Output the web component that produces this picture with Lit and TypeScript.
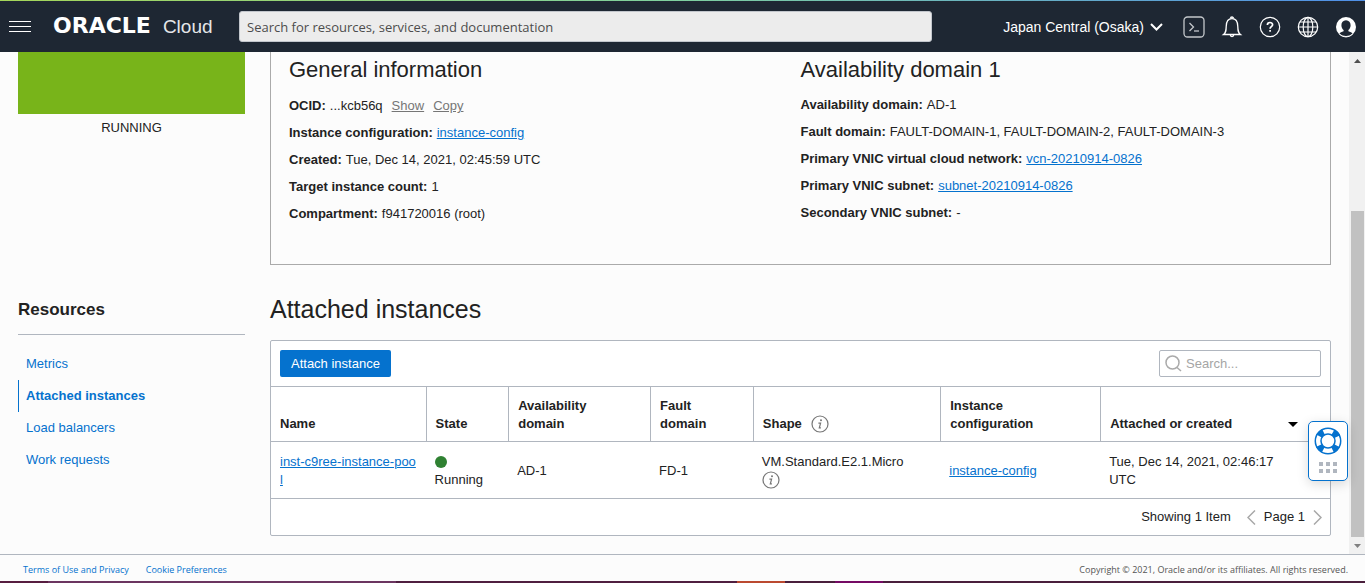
import { LitElement, html, css, svg } from "lit";
import { customElement } from "lit/decorators.js";

interface Detail {
  label: string;
  value?: string;
  link?: string;
  actions?: string[];
}

const general: Detail[] = [
  { label: "OCID:", value: "...kcb56q", actions: ["Show", "Copy"] },
  { label: "Instance configuration:", link: "instance-config" },
  { label: "Created:", value: "Tue, Dec 14, 2021, 02:45:59 UTC" },
  { label: "Target instance count:", value: "1" },
  { label: "Compartment:", value: "f941720016 (root)" },
];

const domain: Detail[] = [
  { label: "Availability domain:", value: "AD-1" },
  { label: "Fault domain:", value: "FAULT-DOMAIN-1, FAULT-DOMAIN-2, FAULT-DOMAIN-3" },
  { label: "Primary VNIC virtual cloud network:", link: "vcn-20210914-0826" },
  { label: "Primary VNIC subnet:", link: "subnet-20210914-0826" },
  { label: "Secondary VNIC subnet:", value: "-" },
];

const base = css`
  :host {
    display: block;
    box-sizing: border-box;
    font-family: "Liberation Sans", Arial, sans-serif;
    font-size: 13px;
    line-height: 18px;
    color: #222;
  }
  *, *::before, *::after { box-sizing: border-box; }
  button {
    font: inherit;
    color: inherit;
    background: none;
    border: 0;
    padding: 0;
    cursor: pointer;
  }
  a { color: #0572ce; }
  svg { display: block; }
  h2, p, dl, dd, ul { margin: 0; padding: 0; }
`;

@customElement("console-header")
class ConsoleHeader extends LitElement {
  static styles = [base, css`
    .bar {
      display: flex;
      align-items: center;
      height: 52px;
      padding: 1px 8px 0 9px;
      background: linear-gradient(90deg, #a5d65a, #7fcfa0 50%, #4f8fe8) top / 100% 1px no-repeat #1e2733;
      color: #fff;
    }
    .menu { flex: none; }
    .brand {
      flex: none;
      display: flex;
      align-items: baseline;
      width: 185px;
      padding-left: 22px;
      gap: 12px;
      font-size: 19px;
      line-height: 26px;
      color: #fff;
      text-decoration: none;
      white-space: nowrap;
    }
    .word { font-family: "DejaVu Sans", sans-serif; font-size: 22px; font-weight: bold; }
    .cloud { color: #e4e6e8; }
    .search {
      flex: 1;
      min-width: 120px;
      height: 31px;
      margin: 0 71px 0 23px;
      padding: 0 7px;
      border: 1px solid #c2c6cc;
      border-radius: 3px;
      background: #ececec;
      font: 13px/18px "Open Sans", "Noto Sans", sans-serif;
      color: #333;
    }
    .search::placeholder { color: #4c4c4c; opacity: 1; }
    .region {
      display: flex;
      align-items: center;
      gap: 6px;
      margin-right: 20px;
      white-space: nowrap;
      font-size: 14px;
    }
    .tools { display: flex; gap: 16px; }
  `];

  render() {
    return html`
      <header class="bar">
        <button class="menu" aria-label="Navigation menu">
          <svg width="22" height="12" viewBox="0 0 22 12" stroke="#fff" fill="none">
            <path d="M0 .5h22M0 5.500h22M0 10.500h22" />
          </svg>
        </button>
        <a class="brand" href="#"><span class="word">ORACLE</span><span class="cloud">Cloud</span></a>
        <input class="search" type="search" aria-label="Search" placeholder="Search for resources, services, and documentation" />
        <button class="region">
          Japan Central (Osaka)
          <svg width="13" height="8" viewBox="0 0 13 8" fill="none" stroke="#fff" stroke-width="2"><path d="M1 1l5.500 5.500L12 1" /></svg>
        </button>
        <div class="tools">
          <button aria-label="Cloud Shell">
            <svg width="22" height="22" viewBox="0 0 22 22" fill="none" stroke="#c4c8cc" stroke-width="1.300">
              <rect x="1" y="1" width="20" height="20" rx="3.500" />
              <path d="M6.500 7l4 4-4 4" /><path d="M11 15h5" />
            </svg>
          </button>
          <button aria-label="Announcements">
            <svg width="22" height="22" viewBox="0 0 22 22" fill="none" stroke="#fff" stroke-width="1.300">
              <path d="M2.500 18.500c2.600-2 2.600-4 2.700-8C5.300 5.500 7 2.700 11 2.700s5.700 2.800 5.800 7.800c.1 4 .1 6 2.700 8z" />
              <path d="M9.500 2.500a1.500 1.500 0 0 1 3 0M9.300 18.800a1.700 1.700 0 0 0 3.400 0" />
            </svg>
          </button>
          <button aria-label="Help">
            <svg width="22" height="22" viewBox="0 0 22 22" fill="none" stroke="#fff" stroke-width="1.200">
              <circle cx="11" cy="11" r="9.700" />
              <path stroke-width="1.700" d="M8.400 8.900c0-3.200 5.200-3.100 5.200-.2 0 1.900-2.500 2.100-2.500 4M11.100 14v1.800" />
            </svg>
          </button>
          <button aria-label="Language">
            <svg width="22" height="22" viewBox="0 0 22 22" fill="none" stroke="#fff" stroke-width="1.200">
              <circle cx="11" cy="11" r="9.700" /><ellipse cx="11" cy="11" rx="4.800" ry="9.700" />
              <path d="M11 1.300v19.400M1.300 11h19.400M2.800 6h16.400M2.800 16h16.400" />
            </svg>
          </button>
          <button aria-label="Profile">
            <svg width="22" height="22" viewBox="0 0 22 22">
              <circle cx="11" cy="11" r="10" fill="#fff" />
              <path fill="#1e2733" d="M11 4.200c3 0 4.600 2.200 4.600 5 0 2-.9 3.900-2.200 4.900v1.200c2 .5 3.400 1.200 4.100 2.400A10 10 0 0 1 11 20a10 10 0 0 1-6.500-2.300c.7-1.200 2.100-1.900 4.100-2.400v-1.200c-1.300-1-2.200-2.900-2.200-4.900 0-2.800 1.600-5 4.600-5z" />
              <path fill="none" stroke="#fff" d="M4.300 18.200a9.500 9.500 0 0 0 13.400 0" />
            </svg>
          </button>
        </div>
      </header>`;
  }
}

@customElement("instance-details")
class InstanceDetails extends LitElement {
  static styles = [base, css`
    .panel {
      display: grid;
      grid-template-columns: 1fr 1fr;
      padding: 4px 18px 41px;
      border: 1px solid #aaa;
      border-top: 0;
    }
    h2 { font-size: 22px; line-height: 28px; font-weight: normal; margin-bottom: 12px; }
    dl { display: flex; flex-direction: column; gap: 9px; }
    .row { display: flex; align-items: baseline; gap: 4px; }
    dt { font-weight: bold; }
    .actions { display: inline-flex; gap: 9px; margin-left: 9px; }
    .action { color: #767676; text-decoration: underline; line-height: 19px; }
  `];

  private column(title: string, rows: Detail[]) {
    return html`
      <section>
        <h2>${title}</h2>
        <dl>
          ${rows.map((r) => html`
            <div class="row">
              <dt>${r.label}</dt>
              <dd>
                ${r.link ? html`<a href="#">${r.link}</a>` : r.value}${r.actions
                  ? html`<span class="actions">${r.actions.map((a) => html`<button class="action">${a}</button>`)}</span>`
                  : ""}
              </dd>
            </div>`)}
        </dl>
      </section>`;
  }

  render() {
    return html`<div class="panel">${this.column("General information", general)}${this.column("Availability domain 1", domain)}</div>`;
  }
}

const info = svg`
  <circle cx="9" cy="9" r="8" fill="none" stroke="#767676" stroke-width="1.200" />
  <circle cx="10" cy="5.200" r="1" fill="#767676" />
  <path d="M7.400 8.200h2.200l-1.300 4.600h1.600" fill="none" stroke="#767676" stroke-width="1.200" />`;

@customElement("attached-instances")
class AttachedInstances extends LitElement {
  static styles = [base, css`
    h2 { font-size: 25px; line-height: 32px; font-weight: normal; }
    .card {
      margin-top: 15px;
      border: 1px solid #b0b6bf;
      border-radius: 2px;
      background: #fff;
    }
    .toolbar { display: flex; justify-content: space-between; padding: 9px; }
    .primary {
      height: 27px;
      padding: 0 11px;
      border-radius: 2px;
      background: #0572ce;
      color: #fff;
    }
    .find {
      display: flex;
      align-items: center;
      gap: 4px;
      width: 162px;
      height: 27px;
      padding: 0 5px;
      border: 1px solid #b0b6bf;
      border-radius: 2px;
    }
    .find input { flex: 1; min-width: 0; border: 0; padding: 0; outline: 0; background: none; font: inherit; }
    .find input::placeholder { color: #a5a5a5; opacity: 1; }
    table { width: 100%; border-collapse: separate; border-spacing: 0; table-layout: fixed; }
    th {
      height: 56px;
      padding: 9px 9px 8px;
      border: solid #b0b6bf;
      border-width: 1px 0 1px 1px;
      text-align: left;
      vertical-align: bottom;
    }
    td { height: 57px; padding: 10px 9px 8px; border-bottom: 1px solid #b0b6bf; vertical-align: middle; }
    th:first-child { border-left: 0; }
    .name { width: 14.600%; word-break: break-all; }
    .state { width: 7.800%; }
    .ad { width: 13.400%; }
    .fd { width: 9.700%; }
    .shape { width: 17.700%; }
    .config { width: 15.100%; }
    .inline { display: flex; align-items: center; justify-content: flex-start; gap: 9px; }
    .sort { justify-content: space-between; padding-right: 23px; }
    .dot { width: 12px; height: 12px; border-radius: 50%; background: #2f8132; margin: 3px 0; }
    .pager { display: flex; justify-content: flex-end; align-items: center; height: 36px; padding: 0 8px; }
    .pager p { margin-right: 16px; }
    .pages { display: flex; align-items: center; gap: 8px; }
  `];

  render() {
    return html`
      <section>
        <h2>Attached instances</h2>
        <div class="card">
          <div class="toolbar">
            <button class="primary">Attach instance</button>
            <label class="find">
              <svg width="17" height="17" viewBox="0 0 17 17" fill="none" stroke="#aaa" stroke-width="1.500"><circle cx="7.500" cy="7.500" r="6.500" /><path d="M12 12.500l4 3.500" /></svg>
              <input type="search" aria-label="Search instances" placeholder="Search..." />
            </label>
          </div>
          <table>
            <thead>
              <tr>
                <th class="name">Name</th>
                <th class="state">State</th>
                <th class="ad">Availability<br />domain</th>
                <th class="fd">Fault<br />domain</th>
                <th class="shape"><div class="inline">Shape <svg width="18" height="18" viewBox="0 0 18 18">${info}</svg></div></th>
                <th class="config">Instance<br />configuration</th>
                <th><div class="inline sort">Attached or created <svg width="10" height="5" viewBox="0 0 10 5"><path d="M0 0h10L5 5z" /></svg></div></th>
              </tr>
            </thead>
            <tbody>
              <tr>
                <td class="name"><a href="#">inst-c9ree-instance-pool</a></td>
                <td><div class="dot"></div>Running</td>
                <td>AD-1</td>
                <td>FD-1</td>
                <td>VM.Standard.E2.1.Micro<svg width="18" height="18" viewBox="0 0 18 18">${info}</svg></td>
                <td><a href="#">instance-config</a></td>
                <td>Tue, Dec 14, 2021, 02:46:17<br />UTC</td>
              </tr>
            </tbody>
          </table>
          <div class="pager">
            <p>Showing 1 Item</p>
            <div class="pages">
              <button aria-label="Previous page"><svg width="9" height="15" viewBox="0 0 9 15" fill="none" stroke="#a8a8a8" stroke-width="1.500"><path d="M8 .5l-7 7 7 7" /></svg></button>
              <span>Page 1</span>
              <button aria-label="Next page"><svg width="9" height="15" viewBox="0 0 9 15" fill="none" stroke="#a8a8a8" stroke-width="1.500"><path d="M1 .5l7 7-7 7" /></svg></button>
            </div>
          </div>
        </div>
      </section>`;
  }
}

@customElement("app-root")
class AppRoot extends LitElement {
  static styles = [base, css`
    :host {
      display: flex;
      flex-direction: column;
      min-height: 100vh;
      background: #fcfcfc;
    }
    .body { flex: 1; display: flex; position: relative; }
    .content {
      flex: 1;
      min-width: 0;
      display: grid;
      grid-template-columns: 227px minmax(0, 1fr);
      column-gap: 25px;
      align-content: start;
      row-gap: 28px;
      padding: 0 18px;
    }
    .status { height: 62px; background: #78b41a; }
    .statusText { text-align: center; margin-top: 5px; }
    .resTitle { font-size: 17px; line-height: 24px; font-weight: bold; padding: 5px 0 12px; border-bottom: 1px solid #b0b6bf; }
    .nav { list-style: none; margin-top: 13px; }
    .nav a { display: block; line-height: 32px; padding-left: 8px; text-decoration: none; }
    .nav .current { font-weight: bold; padding-left: 7px; border-left: 1px solid #0572ce; }
    .scroll {
      flex: none;
      width: 16px;
      display: flex;
      flex-direction: column;
      align-items: center;
      background: #f1f1f1;
    }
    .cap { height: 17px; padding-top: 7px; }
    .before { flex: 142; }
    .thumb { flex: 326; width: 13px; background: #c1c1c1; }
    .help {
      position: absolute;
      right: 17px;
      bottom: 73px;
      width: 40px;
      height: 60px;
      display: flex;
      flex-direction: column;
      align-items: center;
      gap: 7px;
      padding-top: 5px;
      border: 1px solid #0572ce;
      border-radius: 5px;
      background: #fff;
      box-shadow: 0 3px 12px rgba(0, 0, 0, 0.15);
    }
    .footer {
      display: flex;
      align-items: center;
      gap: 17px;
      height: 27px;
      padding: 3px 17px 0 23px;
      border-top: 1px solid #b0b6bf;
      font-family: "Open Sans", "Noto Sans", sans-serif;
      font-size: 9px;
      line-height: 14px;
    }
    .footer a { text-decoration: none; }
    .copy { margin-left: auto; color: #555; }
    .strip {
      height: 2px;
      background: linear-gradient(90deg, #571d40 48px, #6b3560 48px 29%, #4f1f40 29% 54%, #bb4a30 54% 57.500%, #4a1f3c 57.500% 61.200%, #750a64 61.200% 64.700%, #4a1f3c 64.700%);
    }
  `];

  render() {
    return html`
      <console-header></console-header>
      <div class="body">
        <main class="content">
          <div>
            <div class="status"></div>
            <p class="statusText">RUNNING</p>
          </div>
          <instance-details></instance-details>
          <nav aria-label="Resources">
            <h2 class="resTitle">Resources</h2>
            <ul class="nav">
              <li><a href="#">Metrics</a></li>
              <li><a class="current" href="#" aria-current="page">Attached instances</a></li>
              <li><a href="#">Load balancers</a></li>
              <li><a href="#">Work requests</a></li>
            </ul>
          </nav>
          <attached-instances></attached-instances>
        </main>
        <div class="scroll" aria-hidden="true">
          <div class="cap"><svg width="7" height="4" viewBox="0 0 7 4" fill="#505050"><path d="M0 4h7L3.500 0z" /></svg></div>
          <div class="before"></div>
          <div class="thumb"></div>
          <div class="cap"><svg width="7" height="4" viewBox="0 0 7 4" fill="#808080"><path d="M0 0h7L3.500 4z" /></svg></div>
        </div>
        <button class="help" aria-label="Support">
          <svg width="28" height="28" viewBox="0 0 28 28" fill="none">
            <circle cx="14" cy="14" r="10" stroke="#0572ce" stroke-width="7" stroke-dasharray="6 9.708" stroke-dashoffset="-4.854" />
            <circle cx="14" cy="14" r="12.700" stroke="#0572ce" stroke-width="1.500" />
            <circle cx="14" cy="14" r="7" fill="#fff" stroke="#0572ce" stroke-width="1.500" />
          </svg>
          <svg width="18" height="11" viewBox="0 0 18 11" fill="#b0b6bf">
            <path d="M0 0h4v4H0zM7 0h4v4H7zM14 0h4v4h-4zM0 7h4v4H0zM7 7h4v4H7zM14 7h4v4h-4z" />
          </svg>
        </button>
      </div>
      <footer class="footer">
        <a href="#">Terms of Use and Privacy</a>
        <a href="#">Cookie Preferences</a>
        <span class="copy">Copyright © 2021, Oracle and/or its affiliates. All rights reserved.</span>
      </footer>
      <div class="strip"></div>`;
  }
}
